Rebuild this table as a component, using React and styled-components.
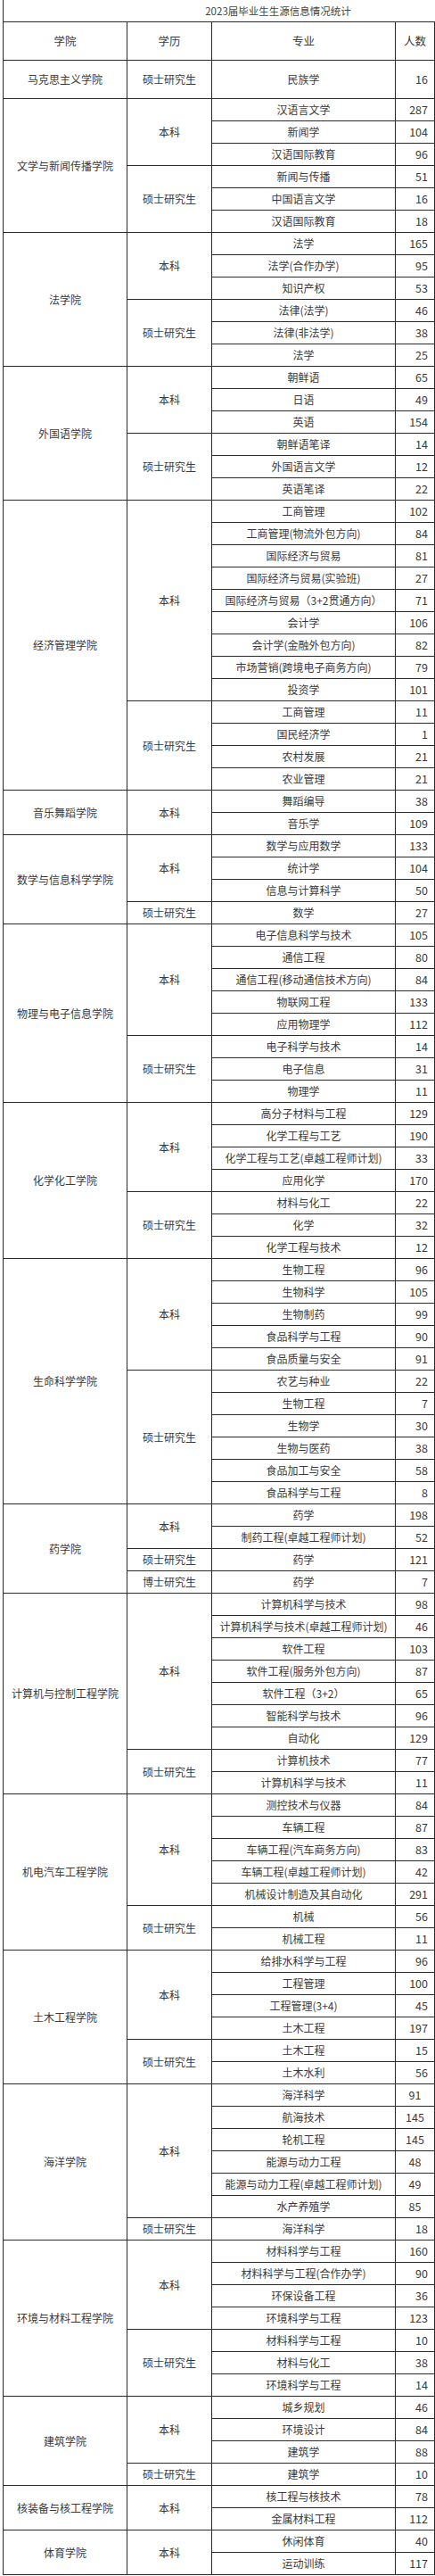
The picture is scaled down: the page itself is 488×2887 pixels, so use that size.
import React from 'react';
import styled, { createGlobalStyle } from 'styled-components';

const GlobalStyle = createGlobalStyle`
  html, body { margin: 0; padding: 0; background: #fff; }
  body { font-family: "Microsoft YaHei", "Noto Sans CJK SC", sans-serif; color: #333; }
`;

const data = [
  { college: '马克思主义学院', tall: true, groups: [{ level: '硕士研究生', items: [['民族学', 16]] }] },
  { college: '文学与新闻传播学院', groups: [
    { level: '本科', items: [['汉语言文学', 287], ['新闻学', 104], ['汉语国际教育', 96]] },
    { level: '硕士研究生', items: [['新闻与传播', 51], ['中国语言文学', 16], ['汉语国际教育', 18]] },
  ] },
  { college: '法学院', groups: [
    { level: '本科', items: [['法学', 165], ['法学(合作办学)', 95], ['知识产权', 53]] },
    { level: '硕士研究生', items: [['法律(法学)', 46], ['法律(非法学)', 38], ['法学', 25]] },
  ] },
  { college: '外国语学院', groups: [
    { level: '本科', items: [['朝鲜语', 65], ['日语', 49], ['英语', 154]] },
    { level: '硕士研究生', items: [['朝鲜语笔译', 14], ['外国语言文学', 12], ['英语笔译', 22]] },
  ] },
  { college: '经济管理学院', groups: [
    { level: '本科', items: [['工商管理', 102], ['工商管理(物流外包方向)', 84], ['国际经济与贸易', 81], ['国际经济与贸易(实验班)', 27], ['国际经济与贸易（3+2贯通方向）', 71], ['会计学', 106], ['会计学(金融外包方向)', 82], ['市场营销(跨境电子商务方向)', 79], ['投资学', 101]] },
    { level: '硕士研究生', items: [['工商管理', 11], ['国民经济学', 1], ['农村发展', 21], ['农业管理', 21]] },
  ] },
  { college: '音乐舞蹈学院', groups: [
    { level: '本科', items: [['舞蹈编导', 38], ['音乐学', 109]] },
  ] },
  { college: '数学与信息科学学院', groups: [
    { level: '本科', items: [['数学与应用数学', 133], ['统计学', 104], ['信息与计算科学', 50]] },
    { level: '硕士研究生', items: [['数学', 27]] },
  ] },
  { college: '物理与电子信息学院', groups: [
    { level: '本科', items: [['电子信息科学与技术', 105], ['通信工程', 80], ['通信工程(移动通信技术方向)', 84], ['物联网工程', 133], ['应用物理学', 112]] },
    { level: '硕士研究生', items: [['电子科学与技术', 14], ['电子信息', 31], ['物理学', 11]] },
  ] },
  { college: '化学化工学院', groups: [
    { level: '本科', items: [['高分子材料与工程', 129], ['化学工程与工艺', 190], ['化学工程与工艺(卓越工程师计划)', 33], ['应用化学', 170]] },
    { level: '硕士研究生', items: [['材料与化工', 22], ['化学', 32], ['化学工程与技术', 12]] },
  ] },
  { college: '生命科学学院', groups: [
    { level: '本科', items: [['生物工程', 96], ['生物科学', 105], ['生物制药', 99], ['食品科学与工程', 90], ['食品质量与安全', 91]] },
    { level: '硕士研究生', items: [['农艺与种业', 22], ['生物工程', 7], ['生物学', 30], ['生物与医药', 38], ['食品加工与安全', 58], ['食品科学与工程', 8]] },
  ] },
  { college: '药学院', groups: [
    { level: '本科', items: [['药学', 198], ['制药工程(卓越工程师计划)', 52]] },
    { level: '硕士研究生', items: [['药学', 121]] },
    { level: '博士研究生', items: [['药学', 7]] },
  ] },
  { college: '计算机与控制工程学院', groups: [
    { level: '本科', items: [['计算机科学与技术', 98], ['计算机科学与技术(卓越工程师计划)', 46], ['软件工程', 103], ['软件工程(服务外包方向)', 87], ['软件工程（3+2）', 65], ['智能科学与技术', 96], ['自动化', 129]] },
    { level: '硕士研究生', items: [['计算机技术', 77], ['计算机科学与技术', 11]] },
  ] },
  { college: '机电汽车工程学院', groups: [
    { level: '本科', items: [['测控技术与仪器', 84], ['车辆工程', 87], ['车辆工程(汽车商务方向)', 83], ['车辆工程(卓越工程师计划)', 42], ['机械设计制造及其自动化', 291]] },
    { level: '硕士研究生', items: [['机械', 56], ['机械工程', 11]] },
  ] },
  { college: '土木工程学院', groups: [
    { level: '本科', items: [['给排水科学与工程', 96], ['工程管理', 100], ['工程管理(3+4)', 45], ['土木工程', 197]] },
    { level: '硕士研究生', items: [['土木工程', 15], ['土木水利', 56]] },
  ] },
  { college: '海洋学院', groups: [
    { level: '本科', centered: true, items: [['海洋科学', 91], ['航海技术', 145], ['轮机工程', 145], ['能源与动力工程', 48], ['能源与动力工程(卓越工程师计划)', 49], ['水产养殖学', 85]] },
    { level: '硕士研究生', items: [['海洋科学', 18]] },
  ] },
  { college: '环境与材料工程学院', groups: [
    { level: '本科', items: [['材料科学与工程', 160], ['材料科学与工程(合作办学)', 90], ['环保设备工程', 36], ['环境科学与工程', 123]] },
    { level: '硕士研究生', items: [['材料科学与工程', 10], ['材料与化工', 38], ['环境科学与工程', 14]] },
  ] },
  { college: '建筑学院', groups: [
    { level: '本科', items: [['城乡规划', 46], ['环境设计', 84], ['建筑学', 88]] },
    { level: '硕士研究生', items: [['建筑学', 10]] },
  ] },
  { college: '核装备与核工程学院', groups: [
    { level: '本科', items: [['核工程与核技术', 78], ['金属材料工程', 112]] },
  ] },
  { college: '体育学院', groups: [
    { level: '本科', items: [['休闲体育', 40], ['运动训练', 117]] },
  ] },
];

const Page = styled.div`
  padding-left: 3px;
  width: 485px;
`;

const Title = styled.div`
  height: 24px;
  box-sizing: border-box;
  border-left: 1px solid #2b2b2b;
  display: flex;
  align-items: center;
  justify-content: center;
  padding-left: 132px;
  padding-top: 1px;
  font-size: 11.5px;
  color: #444;
  line-height: 1;
`;

const Grid = styled.div`
  display: grid;
  grid-template-columns: 138px 94px 205px 43px;
  grid-template-rows: 42px 42px;
  grid-auto-rows: 24px;
  gap: 1px;
  padding: 1px;
  background: #2b2b2b;
  width: 485px;
  box-sizing: border-box;
`;

const Cell = styled.div`
  background: #fff;
  display: flex;
  align-items: center;
  justify-content: center;
  font-size: 12px;
  line-height: 1;
  color: #3a3a3a;
  white-space: nowrap;
  overflow: hidden;
  grid-row: ${(p) => (p.$span ? `span ${p.$span}` : 'auto')};
`;

const Count = styled(Cell)`
  justify-content: ${(p) => (p.$centered ? 'center' : 'flex-end')};
  padding-right: ${(p) => (p.$centered ? '0' : '7px')};
  font-size: 12.5px;
`;

const HeadCell = styled(Cell)`
  font-size: 12.5px;
`;

export default function App() {
  return (
    <>
      <GlobalStyle />
      <Page>
        <Title>2023届毕业生生源信息情况统计</Title>
        <Grid>
          <HeadCell>学院</HeadCell>
          <HeadCell>学历</HeadCell>
          <HeadCell>专业</HeadCell>
          <HeadCell>人数</HeadCell>
          {data.map((c) => {
            const total = c.groups.reduce((s, g) => s + g.items.length, 0);
            return c.groups.map((g, gi) =>
              g.items.map((it, ii) => (
                <React.Fragment key={`${c.college}-${gi}-${ii}`}>
                  {gi === 0 && ii === 0 && <Cell $span={total}>{c.college}</Cell>}
                  {ii === 0 && <Cell $span={g.items.length}>{g.level}</Cell>}
                  <Cell>{it[0]}</Cell>
                  <Count $centered={g.centered}>{it[1]}</Count>
                </React.Fragment>
              ))
            );
          })}
        </Grid>
      </Page>
    </>
  );
}
